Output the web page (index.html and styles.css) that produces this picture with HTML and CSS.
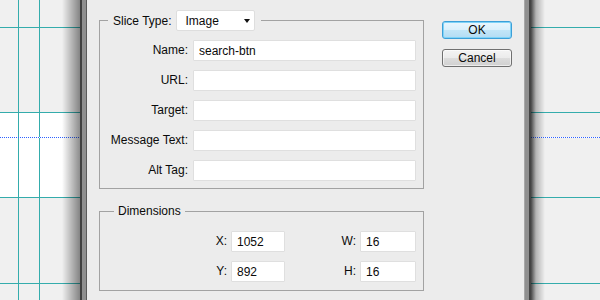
FILE: index.html
```html
<!DOCTYPE html>
<html lang="en">
<head>
  <meta charset="UTF-8">
  <title>Slice Options</title>
  <link rel="stylesheet" href="styles.css">
</head>
<body>

  <div class="workspace">
    <!-- Canvas links van het venster -->
    <div class="canvas canvas-left"></div>

    <div class="frame">
      <div class="dialog">
        <div class="groups">
          <fieldset class="group group-slice">
            <legend>
              <span>Slice Type:</span>
              <div class="select">
                <span>Image</span>
                <span class="caret"></span>
              </div>
            </legend>

            <div class="fields">
              <label>Name:</label>
              <input type="text" value="search-btn">

              <label>URL:</label>
              <input type="text">

              <label>Target:</label>
              <input type="text">

              <label>Message Text:</label>
              <input type="text">

              <label>Alt Tag:</label>
              <input type="text">
            </div>
          </fieldset>

          <fieldset class="group group-dims">
            <legend>Dimensions</legend>

            <div class="dims">
              <label>X:</label>
              <input type="text" value="1052">
              <label>W:</label>
              <input type="text" value="16">

              <label>Y:</label>
              <input type="text" value="892">
              <label>H:</label>
              <input type="text" value="16">
            </div>
          </fieldset>
        </div>

        <div class="buttons">
          <button class="btn btn-default">OK</button>
          <button class="btn">Cancel</button>
        </div>
      </div>
    </div>

    <!-- Canvas rechts van het venster -->
    <div class="canvas canvas-right"></div>
  </div>

</body>
</html>
```

FILE: styles.css
```css
body {
  margin: 0;
  font-family: 'Liberation Sans', Arial, sans-serif;
  font-size: 12px;
  color: #0a0a0a;
  background-color: #f0f0f0;
  overflow: hidden;
}

.workspace {
  display: flex;
  height: 300px;
}

.canvas {
  height: 300px;
}

.canvas-left {
  width: 80px;
  background:
    linear-gradient(to right, rgba(0,0,0,0) 62px, rgba(0,0,0,0.45) 80px),
    repeating-linear-gradient(to right, #2f62ff 0 1px, #ffffff 1px 2px) 0 137px / 100% 1px no-repeat,
    linear-gradient(to right, transparent 18px, #34acac 18px 19px, transparent 19px 39px, #34acac 39px 40px, transparent 40px),
    linear-gradient(to bottom, transparent 27px, #34acac 27px 28px, transparent 28px 112px, #34acac 112px 113px, transparent 113px 197px, #34acac 197px 198px, transparent 198px 283px, #34acac 283px 284px, transparent 284px),
    linear-gradient(to bottom, #f0f0f0 112px, #ffffff 112px 197px, #f0f0f0 197px);
}

.canvas-right {
  flex: 1;
  background:
    linear-gradient(to right, rgba(0,0,0,0.7) 0, rgba(0,0,0,0.25) 5px, rgba(0,0,0,0) 14px),
    repeating-linear-gradient(to right, #2f62ff 0 1px, #ffffff 1px 2px) 0 137px / 100% 1px no-repeat,
    linear-gradient(to bottom, transparent 27px, #34acac 27px 28px, transparent 28px 112px, #34acac 112px 113px, transparent 113px 197px, #34acac 197px 198px, transparent 198px 283px, #34acac 283px 284px, transparent 284px),
    #f0f0f0;
}

.frame {
  display: flex;
  width: 451px;
  box-sizing: border-box;
  padding: 0 4px;
  background: #8f8f8f;
  border-left: 2px solid #404040;
  border-right: 2px solid #444;
}

.dialog {
  flex: 1;
  display: flex;
  gap: 18px;
  padding: 10px 11px 0 12px;
  background: #ececec;
  border-left: 1px solid #5a5a5a;
  border-right: 1px solid #a8a8a8;
}

.groups {
  width: 325px;
}

.group {
  margin: 0;
  min-width: 0;
  border: 1px solid #a2a2a2;
}

legend {
  line-height: 16px;
}

.group-slice {
  padding: 9px 7px 7px 0;
}

.group-slice legend {
  display: flex;
  align-items: center;
  gap: 5px;
  margin-left: 8px;
  padding: 0 6px 0 5px;
}

.select {
  display: flex;
  align-items: center;
  justify-content: space-between;
  width: 79px;
  height: 21px;
  box-sizing: border-box;
  padding: 0 4px 0 8px;
  background: #fff;
  border: 1px solid #dedede;
  border-radius: 2px;
}

.caret {
  width: 0;
  height: 0;
  border-left: 3px solid transparent;
  border-right: 3px solid transparent;
  border-top: 4px solid #111;
}

.fields {
  display: grid;
  grid-template-columns: 88px 223px;
  column-gap: 5px;
  row-gap: 9px;
}

label {
  text-align: right;
  line-height: 21px;
  white-space: nowrap;
}

input[type="text"] {
  height: 21px;
  box-sizing: border-box;
  margin: 0;
  padding: 0 5px;
  border: 1px solid #dfdfdf;
  border-radius: 1px;
  background: #fff;
  font-family: 'Liberation Sans', Arial, sans-serif;
  font-size: 12px;
  color: #0a0a0a;
  outline: none;
}

.group-dims {
  margin-top: 14px;
  padding: 12px 7px 8px 0;
}

.group-dims legend {
  margin-left: 14px;
  padding: 0 4px;
}

.dims {
  display: grid;
  grid-template-columns: 127px 54px 67px 56px;
  column-gap: 4px;
  row-gap: 9px;
}

.dims input[type="text"] {
  width: 100%;
}

.buttons {
  display: flex;
  flex-direction: column;
  gap: 10px;
  padding-top: 11px;
}

.btn {
  width: 70px;
  height: 18px;
  padding: 0;
  font-family: 'Liberation Sans', Arial, sans-serif;
  font-size: 12px;
  color: #0a0a0a;
  border: 1px solid #707070;
  border-radius: 3px;
  background: linear-gradient(to bottom, #f4f4f4 0%, #ebebeb 50%, #dddddd 50%, #d0d0d0 100%);
  box-shadow: inset 0 0 0 1px rgba(255,255,255,0.6);
  cursor: pointer;
}

.btn-default {
  border-color: #3c9fd8;
  background: linear-gradient(to bottom, #eaf6fd 0%, #d9f0fc 50%, #c3e6f8 50%, #b3dcf4 100%);
  box-shadow: inset 0 0 0 1px #7fd3f7;
}
```
